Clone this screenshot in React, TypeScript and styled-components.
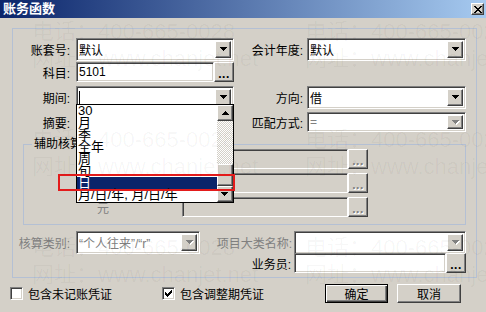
import * as React from 'react'
import styled, { createGlobalStyle, css } from 'styled-components'

/**
 * Component
 */

const GlobalStyle = createGlobalStyle`
    html, body {
        margin: 0;
        padding: 0;
        background: #d4d0c8;
    }
    body {
        font-family: "Liberation Sans", "Noto Sans CJK SC", sans-serif;
        font-size: 12px;
        color: #000;
    }
`

const periods = ['30', '月', '季', '全年', '周', '旬', '日', '月/日/年, 月/日/年']

const ArrowIcon = ({ disabled }: { disabled?: boolean }) => (
    <svg width="8" height="5" viewBox="0 0 8 5" shapeRendering="crispEdges">
        {disabled && (
            <path d="M1 1h7v1H1z M2 2h5v1H2z M3 3h3v1H3z M4 4h1v1H4z" fill="#fff" />
        )}
        <path
            d="M0 0h7v1H0z M1 1h5v1H1z M2 2h3v1H2z M3 3h1v1H3z"
            fill={disabled ? '#808080' : '#000'}
        />
    </svg>
)

const Combo = ({ value, disabled, caret }: { value?: string; disabled?: boolean; caret?: boolean }) => (
    <Field>
        <FieldText $disabled={disabled}>
            {caret && <Caret />}
            {value}
        </FieldText>
        <DropBtn>
            <ArrowIcon disabled={disabled} />
        </DropBtn>
    </Field>
)

const Check = ({ checked }: { checked?: boolean }) => (
    <CheckBox>
        {checked && (
            <svg width="7" height="7" viewBox="0 0 7 7" shapeRendering="crispEdges">
                <path d="M0 2h1v3H0z M1 3h1v3H1z M2 4h1v3H2z M3 3h1v3H3z M4 2h1v3H4z M5 1h1v3H5z M6 0h1v3H6z" fill="#000" />
            </svg>
        )}
    </CheckBox>
)

export default function App() {
    return (
        <>
            <GlobalStyle />
            <Window>
                <TitleBar>
                    <Title>账务函数</Title>
                    <CloseBox>
                        <svg width="8" height="7" viewBox="0 0 8 7" shapeRendering="crispEdges">
                            <path d="M0 0h2v1H0z M6 0h2v1H6z M1 1h2v1H1z M5 1h2v1H5z M2 2h4v1H2z M3 3h2v1H3z M2 4h4v1H2z M1 5h2v1H1z M5 5h2v1H5z M0 6h2v1H0z M6 6h2v1H6z" fill="#000" />
                        </svg>
                    </CloseBox>
                </TitleBar>

                <Group>
                    <FormRow $cols="63px 158px 73px 159px" $h={18} $mt={0}>
                        <Label>账套号:</Label>
                        <Combo value="默认" />
                        <Label $pr={4}>会计年度:</Label>
                        <Combo value="默认" />
                    </FormRow>
                    <FormRow $cols="63px 158px 73px 159px" $h={19} $mt={6}>
                        <Label>科目:</Label>
                        <Pair>
                            <Field>
                                <FieldText>5101</FieldText>
                            </Field>
                            <DotsBtn>...</DotsBtn>
                        </Pair>
                    </FormRow>
                    <FormRow $cols="63px 158px 73px 159px" $h={18} $mt={5}>
                        <Label>期间:</Label>
                        <Combo caret />
                        <Label $pr={4}>方向:</Label>
                        <Combo value="借" />
                    </FormRow>
                    <FormRow $cols="63px 158px 73px 159px" $h={19} $mt={8}>
                        <Label>摘要:</Label>
                        <Field />
                        <Label $pr={4}>匹配方式:</Label>
                        <Combo value="=" disabled />
                    </FormRow>

                    <SubGroup>
                        <Legend>辅助核算</Legend>
                        <FormRow $cols="158px 166px 21px" $h={20} $mt={0}>
                            <SubLabel />
                            <Field $grey />
                            <DotsBtn $disabled>...</DotsBtn>
                        </FormRow>
                        <FormRow $cols="158px 166px 21px" $h={20} $mt={4}>
                            <SubLabel />
                            <Field $grey />
                            <DotsBtn $disabled>...</DotsBtn>
                        </FormRow>
                        <FormRow $cols="158px 166px 21px" $h={20} $mt={4}>
                            <SubLabel>元</SubLabel>
                            <Field $grey />
                            <DotsBtn $disabled>...</DotsBtn>
                        </FormRow>
                    </SubGroup>

                    <FormRow $cols="63px 124px 94px 172px" $h={18} $mt={6}>
                        <Label $disabled>核算类别:</Label>
                        <Combo value={'“个人往来”/“r”'} disabled />
                        <Label $disabled $pr={2}>项目大类名称:</Label>
                        <Combo disabled />
                    </FormRow>
                    <FormRow $cols="63px 124px 94px 172px" $h={20} $mt={4}>
                        <span />
                        <span />
                        <Label $pr={3}>业务员:</Label>
                        <Pair>
                            <Field />
                            <DotsBtn>...</DotsBtn>
                        </Pair>
                    </FormRow>
                </Group>

                <Footer>
                    <CheckItem $w={152}>
                        <Check />
                        <span>包含未记账凭证</span>
                    </CheckItem>
                    <CheckItem $w={163}>
                        <Check checked />
                        <span>包含调整期凭证</span>
                    </CheckItem>
                    <PushBtn $w={63} $default>确定</PushBtn>
                    <PushBtn $w={64}>取消</PushBtn>
                </Footer>

                <DropList>
                    <Items>
                        {periods.map(p => (
                            <Item key={p} $selected={p === '日'}>
                                {p}
                            </Item>
                        ))}
                    </Items>
                    <ScrollBar>
                        <ScrollBtn>
                            <svg width="7" height="4" viewBox="0 0 7 4" shapeRendering="crispEdges">
                                <path d="M3 0h1v1H3z M2 1h3v1H2z M1 2h5v1H1z M0 3h7v1H0z" fill="#000" />
                            </svg>
                        </ScrollBtn>
                        <Track />
                        <Thumb />
                        <ScrollBtn>
                            <ArrowIcon />
                        </ScrollBtn>
                    </ScrollBar>
                </DropList>

                <Highlight />

                <Watermark>
                    {[0, 1, 2, 3, 4, 5].map(i => (
                        <div key={i}>
                            <div>电话：400-665-0028</div>
                            <div>网址：www.chanjet.net</div>
                        </div>
                    ))}
                </Watermark>
            </Window>
        </>
    )
}

/**
 * Styles
 */

const Sunken = css`
    box-sizing: border-box;
    border: 1px solid;
    border-color: #808080 #ffffff #ffffff #808080;
    box-shadow: inset 1px 1px 0 #404040, inset -1px -1px 0 #d4d0c8;
`

const Raised = css`
    box-sizing: border-box;
    background: #d4d0c8;
    border: 1px solid;
    border-color: #ffffff #404040 #404040 #ffffff;
    box-shadow: inset -1px -1px 0 #808080;
`

const Window = styled.div`
    position: relative;
    width: 486px;
    height: 312px;
    overflow: hidden;
    background: #d4d0c8;
    display: flex;
    flex-direction: column;
`

const TitleBar = styled.div`
    height: 18px;
    flex-shrink: 0;
    display: flex;
    align-items: center;
    justify-content: space-between;
    padding: 0 2px 0 3px;
    background: linear-gradient(to right, #0a246a, #a6caf0);
`

const Title = styled.div`
    color: #fff;
    font-weight: bold;
    font-size: 13px;
    line-height: 18px;
`

const CloseBox = styled.div`
    ${Raised}
    width: 13px;
    height: 12px;
    display: flex;
    align-items: center;
    justify-content: center;
`

const Group = styled.div`
    box-sizing: border-box;
    height: 250px;
    margin: 10px 9px 0 12px;
    padding-top: 9px;
    border: 1px solid #b4c0d4;
    flex-shrink: 0;
`

const FormRow = styled.div<{ $cols: string; $h: number; $mt: number }>`
    display: grid;
    grid-template-columns: ${p => p.$cols};
    height: ${p => p.$h}px;
    margin-top: ${p => p.$mt}px;
`

const Label = styled.div<{ $disabled?: boolean; $pr?: number }>`
    text-align: right;
    white-space: nowrap;
    padding-right: ${p => p.$pr ?? 6}px;
    display: flex;
    align-items: center;
    justify-content: flex-end;
    color: ${p => (p.$disabled ? '#808080' : '#000')};
`

const SubLabel = styled.div`
    display: flex;
    align-items: center;
    justify-content: center;
    color: #808080;
`

const Pair = styled.div`
    display: flex;
    gap: 0;
    min-width: 0;
`

const Field = styled.div<{ $grey?: boolean }>`
    ${Sunken}
    flex: 1;
    min-width: 0;
    height: 100%;
    padding: 2px;
    display: flex;
    align-items: stretch;
    background: ${p => (p.$grey ? '#d4d0c8' : '#fff')};
`

const FieldText = styled.div<{ $disabled?: boolean }>`
    flex: 1;
    display: flex;
    align-items: center;
    white-space: nowrap;
    overflow: hidden;
    color: ${p => (p.$disabled ? '#808080' : '#000')};
`

const Caret = styled.span`
    width: 1px;
    height: 13px;
    background: #000;
`

const DropBtn = styled.div`
    ${Raised}
    width: 16px;
    flex-shrink: 0;
    display: flex;
    align-items: center;
    justify-content: center;
    padding-left: 1px;
`

const DotsBtn = styled.div<{ $disabled?: boolean }>`
    ${Raised}
    width: 20px;
    flex-shrink: 0;
    height: 100%;
    display: flex;
    align-items: flex-end;
    justify-content: center;
    padding-bottom: 2px;
    font-weight: bold;
    font-size: 12px;
    line-height: 10px;
    letter-spacing: 0.5px;
    color: ${p => (p.$disabled ? '#808080' : '#000')};
    text-shadow: ${p => (p.$disabled ? '1px 1px 0 #fff' : 'none')};
`

const SubGroup = styled.div`
    position: relative;
    box-sizing: border-box;
    height: 81px;
    margin: 13px 10px 0 10px;
    padding-top: 4px;
    border: 1px solid #b4c0d4;
`

const Legend = styled.div`
    position: absolute;
    left: 8px;
    top: -8px;
    padding: 0 2px;
    background: #d4d0c8;
    line-height: 14px;
`

const Footer = styled.div`
    display: flex;
    align-items: center;
    height: 19px;
    margin-top: 6px;
    padding-left: 10px;
`

const CheckItem = styled.div<{ $w: number }>`
    width: ${p => p.$w}px;
    display: flex;
    align-items: center;
    gap: 5px;
`

const CheckBox = styled.div`
    ${Sunken}
    width: 13px;
    height: 13px;
    background: #fff;
    display: flex;
    align-items: center;
    justify-content: center;
`

const PushBtn = styled.div<{ $w: number; $default?: boolean }>`
    ${Raised}
    width: ${p => p.$w}px;
    height: 19px;
    margin-left: ${p => (p.$default ? 0 : 9)}px;
    display: flex;
    align-items: center;
    justify-content: center;
    ${p =>
        p.$default &&
        css`
            border-color: #000;
            box-shadow: inset 1px 1px 0 #fff, inset -1px -1px 0 #404040, inset -2px -2px 0 #808080;
        `}
`

const DropList = styled.div`
    position: absolute;
    left: 76px;
    top: 104px;
    width: 158px;
    height: 99px;
    box-sizing: border-box;
    border: 1px solid #000;
    background: #fff;
    display: flex;
    z-index: 2;
`

const Items = styled.div`
    flex: 1;
    min-width: 0;
`

const Item = styled.div<{ $selected?: boolean }>`
    height: 12px;
    line-height: 12px;
    padding-left: 1px;
    white-space: nowrap;
    font-size: 13px;
    background: ${p => (p.$selected ? '#0a246a' : 'transparent')};
    color: ${p => (p.$selected ? '#fff' : '#000')};
`

const ScrollBar = styled.div`
    width: 16px;
    display: flex;
    flex-direction: column;
`

const ScrollBtn = styled.div`
    ${Raised}
    height: 16px;
    display: flex;
    align-items: center;
    justify-content: center;
`

const Track = styled.div`
    height: 43px;
    background: repeating-conic-gradient(#d4d0c8 0 25%, #ffffff 0 50%) 0 0 / 2px 2px;
`

const Thumb = styled.div`
    ${Raised}
    height: 22px;
`

const Highlight = styled.div`
    position: absolute;
    left: 58px;
    top: 174px;
    width: 177px;
    height: 17px;
    box-sizing: border-box;
    border: 2px solid #e31b1b;
    z-index: 3;
`

const Watermark = styled.div`
    position: absolute;
    inset: 0;
    z-index: 4;
    pointer-events: none;
    display: grid;
    grid-template-columns: 273px 1fr;
    grid-auto-rows: 54px;
    row-gap: 54px;
    padding: 18px 0 0 32px;
    font-size: 22px;
    line-height: 27px;
    white-space: nowrap;
    color: rgba(0, 0, 0, 0.04);
`
